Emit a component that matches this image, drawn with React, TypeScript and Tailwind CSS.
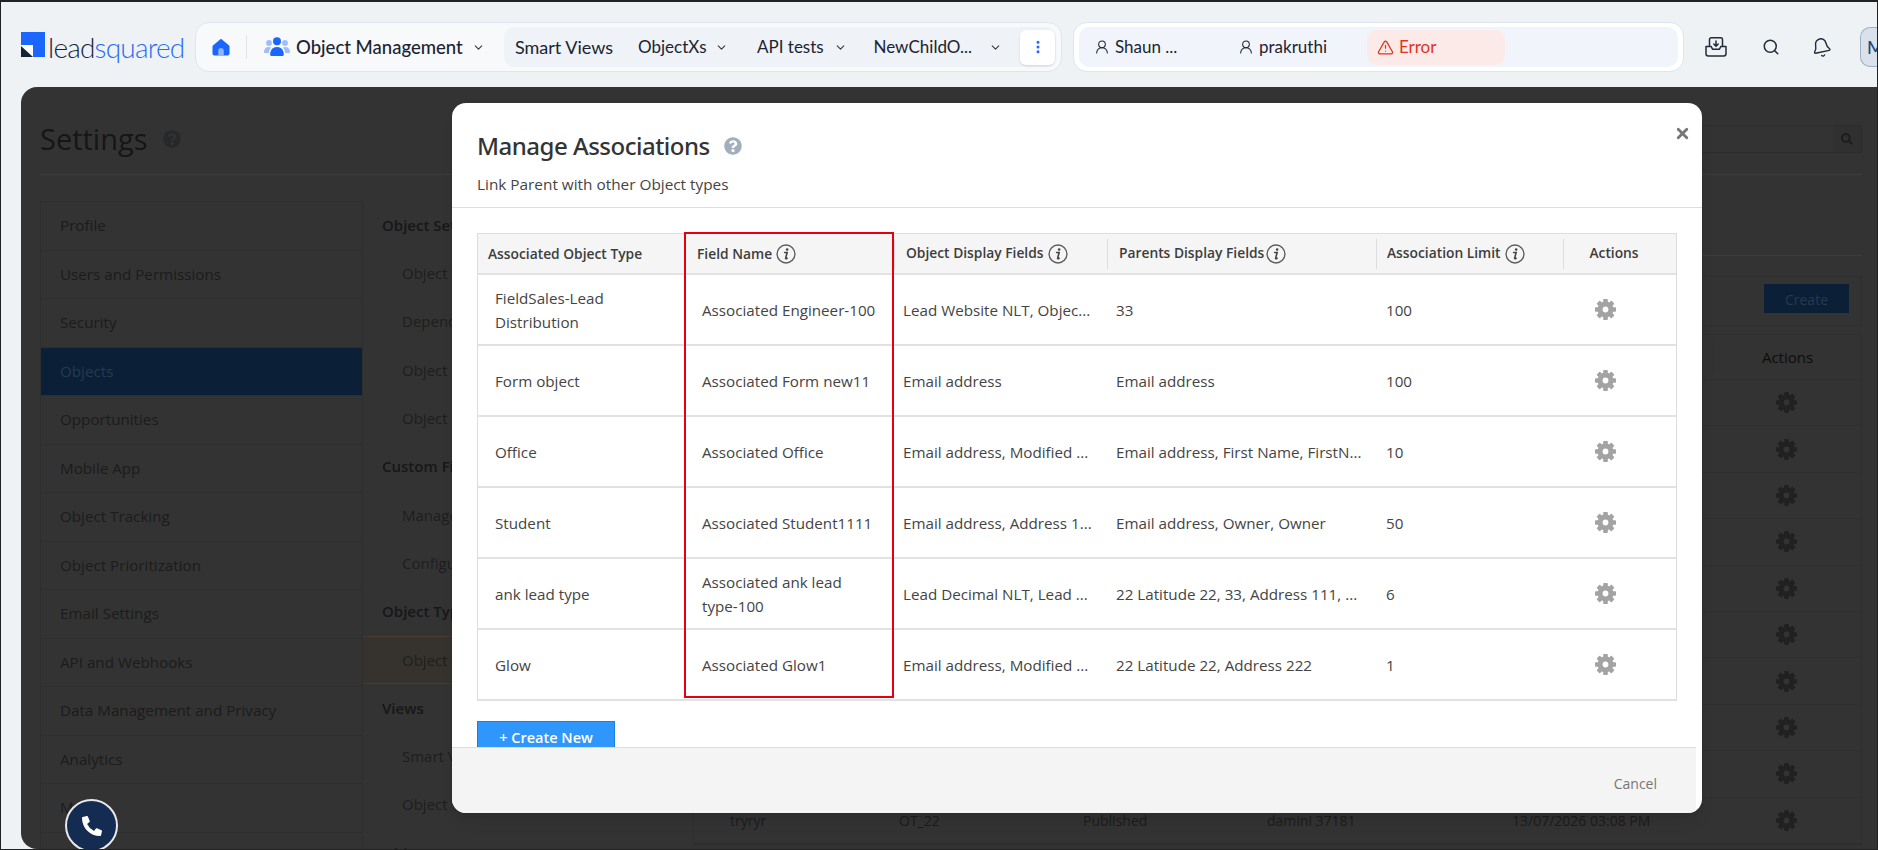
import { Bell, ChevronDown, EllipsisVertical, Search, TriangleAlert, UserRound, X } from 'lucide-react'
import { FaPhoneAlt, FaQuestionCircle, FaSearch } from 'react-icons/fa'

const menuItems = [
  'Profile',
  'Users and Permissions',
  'Security',
  'Objects',
  'Opportunities',
  'Mobile App',
  'Object Tracking',
  'Object Prioritization',
  'Email Settings',
  'API and Webhooks',
  'Data Management and Privacy',
  'Analytics',
  'Mail',
]

const subMenu = [
  { label: 'Object Settings', bold: true },
  { label: 'Object Types' },
  { label: 'Dependencies' },
  { label: 'Object Rules' },
  { label: 'Object Fields' },
  { label: 'Custom Fields', bold: true },
  { label: 'Manage Fields' },
  { label: 'Configure' },
  { label: 'Object Types', bold: true },
  { label: 'Object Types', active: true },
  { label: 'Views', bold: true },
  { label: 'Smart Views' },
  { label: 'Object Views' },
  { label: 'Object Forms', bold: true },
]

const associations = [
  { type: 'FieldSales-Lead Distribution', field: 'Associated Engineer-100', display: 'Lead Website NLT, Objec...', parents: '33', limit: '100' },
  { type: 'Form object', field: 'Associated Form new11', display: 'Email address', parents: 'Email address', limit: '100' },
  { type: 'Office', field: 'Associated Office', display: 'Email address, Modified ...', parents: 'Email address, First Name, FirstN...', limit: '10' },
  { type: 'Student', field: 'Associated Student1111', display: 'Email address, Address 1...', parents: 'Email address, Owner, Owner', limit: '50' },
  { type: 'ank lead type', field: 'Associated ank lead type-100', display: 'Lead Decimal NLT, Lead ...', parents: '22 Latitude 22, 33, Address 111, ...', limit: '6' },
  { type: 'Glow', field: 'Associated Glow1', display: 'Email address, Modified ...', parents: '22 Latitude 22, Address 222', limit: '1' },
]

function InfoIcon() {
  return (
    <svg width="20" height="20" viewBox="0 0 19 19" fill="none" className="shrink-0">
      <circle cx="9.5" cy="9.5" r="8.5" stroke="#5c5c5c" strokeWidth="1.3" />
      <circle cx="10.6" cy="5.2" r="1.2" fill="#444" />
      <path d="M8.2 8h2.4L9.1 13.6c-.1.5.3.6 1.500-.1" stroke="#444" strokeWidth="1.500" strokeLinecap="round" />
    </svg>
  )
}

function GearIcon({ className }: { className: string }) {
  return (
    <svg width="21" height="21" viewBox="0 0 21 21" className={className}>
      {[0, 45, 90, 135, 180, 225, 270, 315].map((deg) => (
        <rect key={deg} x="8.200" y="0" width="4.600" height="5" rx="0.800" fill="currentColor" transform={`rotate(${deg} 10.500 10.500)`} />
      ))}
      <circle cx="10.500" cy="10.500" r="5.400" fill="none" stroke="currentColor" strokeWidth="5" />
    </svg>
  )
}

function LeadSquaredLogo() {
  return (
    <div className="flex items-start w-[174px] shrink-0">
      <svg width="24" height="25" viewBox="0 0 24 25" className="shrink-0">
        <rect width="24" height="25" fill="#1a66ff" />
        <rect y="13" width="12" height="12" fill="#fff" />
        <path d="M0 14 L12 25 H0 Z" fill="#13233a" />
      </svg>
      <div className="ml-[3px] -mt-[3px] text-[28px] leading-[36px] font-light tracking-[-0.800px] font-['Lato',sans-serif]">
        <span className="text-[#16243a]">lead</span>
        <span className="text-[#2a6df4]">squared</span>
      </div>
    </div>
  )
}

function HomeIcon() {
  return (
    <svg width="18" height="18" viewBox="0 0 18 18">
      <path d="M9 .8 1.2 7.2c-.5.4-.7.8-.7 1.4v7c0 1 .8 1.8 1.8 1.8h13.4c1 0 1.8-.8 1.8-1.8v-7c0-.6-.2-1-.7-1.4Z" fill="#1a66ff" />
      <path d="M6.2 18v-5.2c0-1.5 1.2-2.7 2.8-2.7s2.8 1.2 2.8 2.7V18Z" fill="#8fb5ff" />
    </svg>
  )
}

function PeopleIcon() {
  return (
    <svg width="26" height="20" viewBox="0 0 26 20">
      <circle cx="5" cy="6" r="2.9" fill="#9dbdff" />
      <circle cx="21" cy="6" r="2.9" fill="#9dbdff" />
      <path d="M0 15c0-3 1.8-5 4.6-5 1 0 1.9.2 2.6.8C5.700 12 4.900 13.600 4.800 16H1c-.6 0-1-.4-1-1Z" fill="#9dbdff" />
      <path d="M26 15c0-3-1.800-5-4.600-5-1 0-1.900.2-2.600.8 1.500 1.200 2.300 2.800 2.400 5.200H25c.6 0 1-.4 1-1Z" fill="#9dbdff" />
      <circle cx="13" cy="4.200" r="4" fill="#1a66ff" />
      <path d="M6.200 17.400c0-4.300 2.500-7.400 6.800-7.400s6.800 3.100 6.800 7.400c0 1-.7 1.600-1.600 1.600H7.800c-.9 0-1.600-.6-1.600-1.600Z" fill="#1a66ff" />
    </svg>
  )
}

function InboxDownloadIcon() {
  return (
    <svg width="22" height="20" viewBox="0 0 22 20" fill="none" stroke="#222b3a" strokeWidth="1.5" strokeLinejoin="round" strokeLinecap="round">
      <path d="M4.500 9V2.500c0-1 .7-1.700 1.700-1.700h9.600c1 0 1.700.7 1.700 1.700V9" />
      <path d="M1 9.500h5.200l1.300 2.700h7l1.300-2.700H21v7.300c0 1.200-.9 2.200-2.200 2.200H3.200C1.900 19 1 18 1 16.800Z" />
      <path d="M11 4v5M8.800 7l2.200 2.200L13.200 7" />
    </svg>
  )
}

function NavMenu({ label, width }: { label: string; width: string }) {
  return (
    <div className={`flex items-center justify-between ${width}`}>
      <span>{label}</span>
      <ChevronDown size={13} strokeWidth={2} className="text-[#333b47]" />
    </div>
  )
}

function TopBar() {
  return (
    <header className="flex items-start h-[85px] pt-[20px] pl-[20px] font-['Lato',sans-serif] text-[16px] text-[#1b2433]">
      <div className="mt-[10px]">
        <LeadSquaredLogo />
      </div>
      <nav className="flex items-center h-[50px] w-[867px] shrink-0 rounded-[14px] border border-[#dfe5ee] bg-[#f7f9fb]">
        <div className="w-[18px] ml-[16px]">
          <HomeIcon />
        </div>
        <div className="w-px h-[24px] bg-[#dfe3ea] ml-[16px]" />
        <div className="ml-[17px]">
          <PeopleIcon />
        </div>
        <span className="ml-[6px] mt-[2px] w-[176px] text-[18.500px] font-medium whitespace-nowrap">Object Management</span>
        <ChevronDown size={13} strokeWidth={2} className="text-[#333b47]" />
        <div className="flex items-center flex-1 h-[40px] ml-[19px] mr-[5px] pl-[11px] rounded-[10px] bg-[#eff2f6]">
          <span className="w-[123px] text-[18px]">Smart Views</span>
          <div className="text-[17px] flex items-center">
            <NavMenu label="ObjectXs" width="w-[119px] pr-[29px]" />
            <NavMenu label="API tests" width="w-[116.500px] pr-[26.500px]" />
            <NavMenu label="NewChildO..." width="w-[128.500px]" />
          </div>
          <button className="ml-[18px] w-[35px] h-[35px] flex items-center justify-center rounded-[6px] bg-white shadow-sm text-[#1a66ff]">
            <EllipsisVertical size={16} strokeWidth={2.500} />
          </button>
        </div>
      </nav>
      <div className="flex items-center h-[50px] w-[611px] shrink-0 ml-[11px] px-[5px] rounded-[14px] border border-[#dfe5ee] bg-white">
        <div className="flex items-center flex-1 h-[40px] pl-[15px] rounded-[10px] bg-[#f2f4fc] text-[17px]">
          <UserRound size={16} strokeWidth={1.600} />
          <span className="ml-[5px] w-[123px]">Shaun ...</span>
          <UserRound size={16} strokeWidth={1.600} />
          <span className="ml-[5px] w-[108px]">prakruthi</span>
          <div className="flex items-center w-[138px] h-[35px] pl-[10px] gap-[5px] rounded-[10px] bg-[#fbeae8] text-[#e0341e]">
            <TriangleAlert size={17} strokeWidth={1.800} />
            <span>Error</span>
          </div>
        </div>
      </div>
      <div className="flex items-center h-[50px] ml-[21px] flex-1 min-w-0">
        <InboxDownloadIcon />
        <Search size={18} strokeWidth={2} className="ml-[35px] text-[#222b3a]" />
        <Bell size={21} strokeWidth={1.600} className="ml-[31px] -rotate-12 text-[#222b3a]" />
        <div className="ml-[28px] flex-1 h-[40px] pl-[6px] flex items-center rounded-l-[10px] border border-r-0 border-[#9fb0c5] bg-[#d8e1ec] text-[#1d4a7a] text-[18px] font-medium overflow-hidden">
          M
        </div>
      </div>
    </header>
  )
}

function SettingsBackdrop() {
  const rows = Array.from({ length: 10 })
  return (
    <div className="h-full pl-[19px] pr-[15px] font-['Open_Sans',sans-serif] text-[#1c1c1c] overflow-hidden">
      <div className="flex items-center justify-between h-[88px] border-b border-[#3d3d3d]">
        <div className="flex items-center gap-[15px] mt-[16px]">
          <span className="text-[29px] leading-none text-[#161616]">Settings</span>
          <FaQuestionCircle size={18} className="text-[#26282b]" />
        </div>
        <div className="flex items-center justify-end w-[300px] h-[28px] mt-[17px] border border-[#2c2c2c] rounded-[2px]">
          <div className="flex items-center justify-center w-[28px] h-full bg-[#303030]">
            <FaSearch size={12} className="text-[#1d1d1d]" />
          </div>
        </div>
      </div>
      <div className="flex mt-[26px]">
        <div className="w-[323px] shrink-0 border-l border-r border-t border-[#2e2e2e] text-[15.200px]">
          {menuItems.map((item) => (
            <div
              key={item}
              className={`flex items-center h-[48.500px] pl-[19px] border-b border-[#2e2e2e] ${item === 'Objects' ? 'bg-[#0b2037] text-[#263a4f]' : ''}`}
            >
              {item}
            </div>
          ))}
        </div>
        <div className="w-[324px] shrink-0 text-[15px] text-[#1e1e1e]">
          {subMenu.map((item, i) => (
            <div
              key={i}
              className={`flex items-center h-[48.300px] ${item.bold ? 'pl-[19px] font-semibold text-[#171717]' : 'pl-[39px]'} ${item.active ? 'bg-[#36332f] border-y border-[#4a3c2c]' : ''}`}
            >
              {item.label}
            </div>
          ))}
        </div>
        <div className="flex-1 min-w-0 pl-[6px]">
          <div className="h-[55px] border-b border-[#3d3d3d]" />
          <div className="flex items-start justify-end h-[50px] mt-[20px] pt-[7px] pr-[12px] border border-[#2e2e2e]">
            <div className="flex items-center justify-center w-[85px] h-[29px] pt-[1px] bg-[#0b2037] text-[#263a4f] text-[14px]">Create</div>
          </div>
          <div className="mt-[8px] border border-[#2e2e2e]">
            <div className="flex items-center h-[45px] border-b border-[#2e2e2e]">
              <div className="flex-1" />
              <div className="flex items-center justify-center w-[148px] h-[30px] border-l border-[#2e2e2e] text-[15px] font-medium text-[#0d0d0d]">Actions</div>
            </div>
            {rows.map((_, i) => (
              <div key={i} className="flex items-center h-[46.400px] border-b border-[#2e2e2e] text-[14px]">
                <span className="w-[205px] pl-[36px]">tryryr</span>
                <span className="w-[184px]">OT_22</span>
                <span className="w-[184px]">Published</span>
                <span className="w-[245px]">damini 37181</span>
                <span className="w-[200px] whitespace-nowrap">13/07/2026 03:08 PM</span>
                <div className="flex-1 flex justify-center">
                  <GearIcon className="text-[#212121]" />
                </div>
                <div className="w-[1px]" />
              </div>
            ))}
          </div>
        </div>
      </div>
    </div>
  )
}

function ManageAssociations() {
  return (
    <div className="absolute top-[16px] left-[431px] w-[1250px] h-[710px] flex flex-col rounded-[14px] bg-white overflow-hidden shadow-lg font-['Open_Sans',sans-serif] text-[#444]">
      <div className="relative h-[105px] shrink-0 border-b border-[#ddd] pl-[25px] pt-[27px]">
        <div className="flex items-center gap-[14px]">
          <h2 className="text-[24px] leading-[32px] font-medium text-[#333] font-['Noto_Sans',sans-serif] tracking-[-0.500px]">Manage Associations</h2>
          <FaQuestionCircle size={18} className="text-[#a3aebd]" />
        </div>
        <p className="mt-[12px] text-[15.350px] leading-[20px]">Link Parent with other Object types</p>
        <X size={17} strokeWidth={4} className="absolute top-[22px] right-[11px] text-[#777]" />
      </div>
      <div className="flex-1 min-h-0 overflow-hidden pl-[25px] pt-[25px]">
        <div className="relative w-[1200px]">
          <table className="w-[1200px] table-fixed border-separate border-spacing-0 text-[15.200px] border-t border-l border-r border-[#ddd]">
            <colgroup>
              <col className="w-[206px]" />
              <col className="w-[210px]" />
              <col className="w-[213px]" />
              <col className="w-[269px]" />
              <col className="w-[187px]" />
              <col />
            </colgroup>
            <thead>
              <tr className="h-[41px] bg-[#f5f5f5] text-[13.800px] font-semibold text-[#3d3d3d]">
                <th className="text-left font-semibold border-b-2 border-[#e2e2e2] pl-[10px] pt-[1px]">Associated Object Type</th>
                <th className="text-left font-semibold border-b-2 border-[#e2e2e2] pl-[13px] pt-[1px]">
                  <div className="flex items-center gap-[4px]">Field Name <InfoIcon /></div>
                </th>
                <th className="text-left font-semibold border-b-2 border-[#e2e2e2]">
                  <div className="flex items-center gap-[4px] h-[30px] pl-[11px] border-l border-[#ddd]">Object Display Fields <InfoIcon /></div>
                </th>
                <th className="text-left font-semibold border-b-2 border-[#e2e2e2]">
                  <div className="flex items-center gap-[2px] h-[30px] pl-[11px] border-l border-[#ddd]">Parents Display Fields <InfoIcon /></div>
                </th>
                <th className="text-left font-semibold border-b-2 border-[#e2e2e2]">
                  <div className="flex items-center gap-[4px] h-[30px] pl-[10px] border-l border-[#ddd]">Association Limit <InfoIcon /></div>
                </th>
                <th className="font-semibold border-b-2 border-[#e2e2e2]">
                  <div className="flex items-center justify-center h-[30px] pr-[12px] border-l border-[#ddd]">Actions</div>
                </th>
              </tr>
            </thead>
            <tbody>
              {associations.map((row) => (
                <tr key={row.field} className="h-[71px]">
                  <td className="border-b-2 border-[#e2e2e2] pl-[17px] pr-[20px] pt-[1px] leading-[24px]">{row.type}</td>
                  <td className="border-b-2 border-[#e2e2e2] pl-[18px] pr-[15px] pt-[1px] leading-[24px]">{row.field}</td>
                  <td className="border-b-2 border-[#e2e2e2] pl-[9px] pt-[1px] whitespace-nowrap">{row.display}</td>
                  <td className="border-b-2 border-[#e2e2e2] pl-[9px] pt-[1px] whitespace-nowrap">{row.parents}</td>
                  <td className="border-b-2 border-[#e2e2e2] pl-[10px] pt-[1px]">{row.limit}</td>
                  <td className="border-b-2 border-[#e2e2e2] pl-[32px]">
                    <GearIcon className="text-[#a3a3a3]" />
                  </td>
                </tr>
              ))}
            </tbody>
          </table>
          {/* review highlight drawn over the Field Name column */}
          <div className="absolute -top-[1px] left-[207px] w-[210px] h-[466px] border-2 border-[#e3000f] pointer-events-none" />
        </div>
        <button className="mt-[20px] w-[138px] h-[36px] flex items-start justify-center pt-[5px] bg-[#2f96fc] border border-[#1b7fe0] text-white text-[14.500px] font-semibold">
          + Create New
        </button>
      </div>
      <div className="h-[66px] shrink-0 mr-[6px] border-t border-[#ddd] bg-[#f4f4f4] flex items-center justify-end pt-[6px] pr-[39px]">
        <span className="text-[14px] text-[#777] font-medium">Cancel</span>
      </div>
    </div>
  )
}

export default function App() {
  return (
    <div className="relative w-[1878px] h-[850px] overflow-hidden bg-[#eef2f5] border-t-2 border-b border-x border-[#222]">
      <TopBar />
      <main className="absolute top-[85px] left-[20px] right-0 bottom-0 rounded-l-[16px] bg-[#333]">
        <SettingsBackdrop />
        <ManageAssociations />
      </main>
      <button className="absolute left-[64px] top-[797px] w-[53px] h-[53px] flex items-center justify-center rounded-full bg-[#152c52] border-2 border-[#e8e8e8] text-white">
        <FaPhoneAlt size={20} />
      </button>
    </div>
  )
}
